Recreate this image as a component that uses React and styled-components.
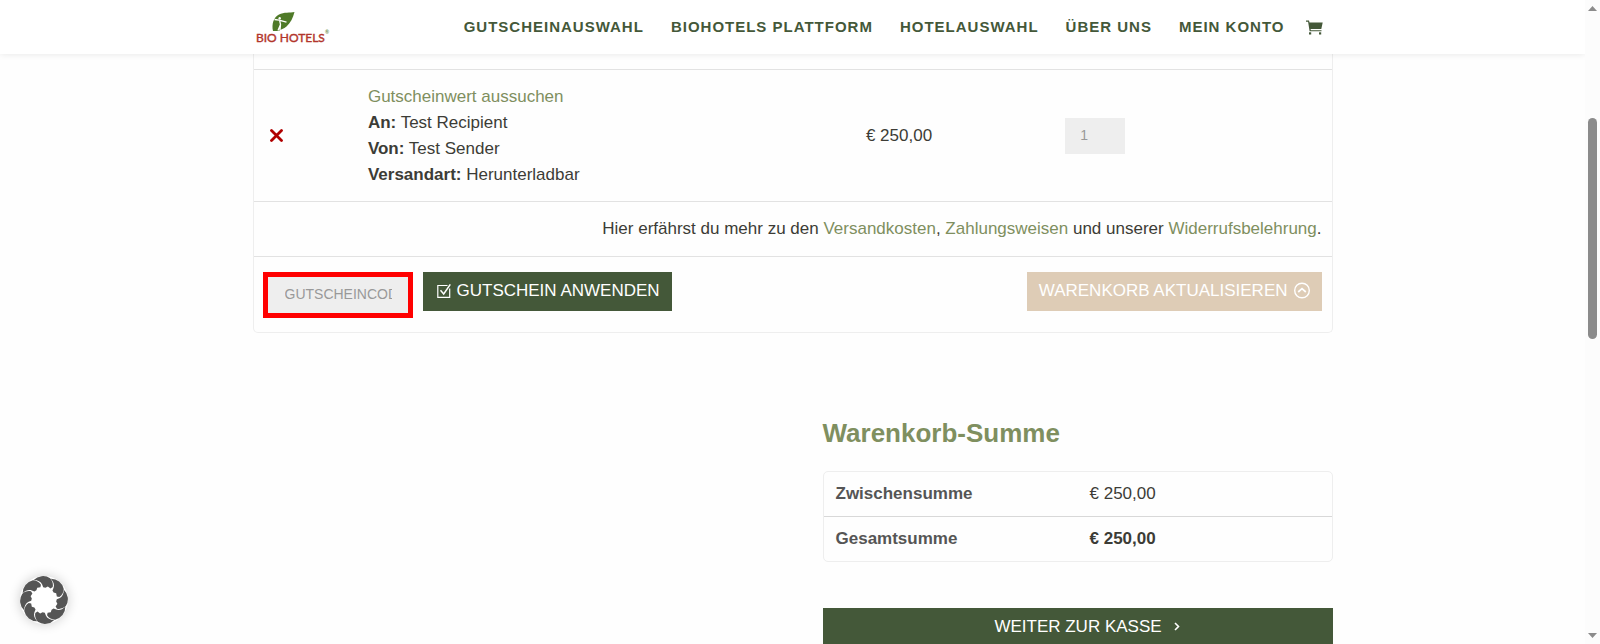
import React from "react";
import styled, { createGlobalStyle } from "styled-components";

const GlobalStyle = createGlobalStyle`
  * {
    box-sizing: border-box;
  }
  body {
    margin: 0;
    background: #fefefe;
    color: #3c3c36;
    font-family: "Liberation Sans", Arial, sans-serif;
    font-size: 17px;
    line-height: 26px;
  }
  a {
    color: #7f8f5f;
    text-decoration: none;
  }
`;

const Shell = styled.div`
  display: grid;
  grid-template-columns: minmax(0, 1fr) 15px;
  height: 100vh;
  overflow: hidden;
`;

const Page = styled.div`
  overflow: hidden;
`;

const Header = styled.header`
  position: relative;
  background: #fff;
  box-shadow: 0 0 7px rgba(0, 0, 0, 0.1);
`;

const Container = styled.div`
  width: 100%;
  max-width: 1080px;
  margin: 0 auto;
`;

const HeaderInner = styled(Container)`
  display: flex;
  align-items: center;
  justify-content: space-between;
  height: 54px;
  padding: 0 10px 0 2px;
`;

const Logo = styled.a`
  display: flex;
  svg {
    display: block;
  }
`;

const Nav = styled.nav`
  display: flex;
  align-items: center;
  gap: 27px;
`;

const NavLink = styled.a`
  padding-bottom: 1px;
  color: #445839;
  font-size: 15px;
  font-weight: bold;
  letter-spacing: 1px;
  text-transform: uppercase;
`;

const CartLink = styled.a`
  display: flex;
  margin-left: -6px;
  color: #445839;
`;

const CartTable = styled.table`
  width: 100%;
  padding-top: 15px;
  border: 1px solid #eee;
  border-top: 0;
  border-radius: 0 0 5px 5px;
  border-spacing: 0;
  table-layout: fixed;
  td {
    padding: 14px 12px 13px;
    border-top: 1px solid #e2e2e2;
    text-align: left;
    vertical-align: middle;
  }
  .remove {
    width: 9.5%;
  }
  .product {
    width: 46.2%;
  }
  .price {
    width: 18.5%;
  }
  td.info {
    padding: 14px 10px;
    text-align: right;
  }
  td.actions {
    padding: 15px 10px 14px 9px;
  }
`;

const RemoveButton = styled.button`
  display: block;
  padding: 3px 4px 5px;
  border: 0;
  background: none;
  color: #b00000;
  svg {
    display: block;
  }
`;

const Quantity = styled.input`
  display: block;
  width: 60px;
  height: 36px;
  padding: 0 15px 2px;
  border: 0;
  border-radius: 0;
  background: #eee;
  color: #999;
  font: 14px "Liberation Sans", Arial, sans-serif;
`;

const Actions = styled.div`
  display: flex;
  align-items: flex-start;
  gap: 10px;
`;

const CouponInput = styled.input`
  width: 150px;
  height: 46px;
  padding: 0 16px 2px 17px;
  border: 5px solid #f00;
  border-radius: 0;
  background: #eee;
  font: 14px "Liberation Sans", Arial, sans-serif;
  &::placeholder {
    color: #999;
    opacity: 1;
  }
`;

const Button = styled.button`
  display: flex;
  align-items: center;
  justify-content: center;
  gap: 6px;
  width: ${(props) => (props.$wide ? "100%" : "auto")};
  height: 39px;
  margin-left: ${(props) => (props.$right ? "auto" : "0")};
  padding: ${(props) => (props.$wide ? "0 0 2px 24px" : "0 12px 2px")};
  border: 0;
  background: ${(props) => (props.$muted ? "#deccb6" : "#445839")};
  color: #fff;
  font: 17px "Liberation Sans", Arial, sans-serif;
  text-transform: uppercase;
  white-space: nowrap;
  svg {
    flex: none;
  }
`;

const Totals = styled.section`
  width: 100%;
  max-width: 510px;
  margin: 84px 0 0 auto;
  h2 {
    margin: 0 0 22px;
    color: #7f8f5f;
    font-size: 26px;
    line-height: 32px;
  }
`;

const TotalsTable = styled.table`
  width: 100%;
  margin-bottom: 46px;
  border: 1px solid #eee;
  border-radius: 5px;
  border-spacing: 0;
  table-layout: fixed;
  th,
  td {
    padding: 9px 12px;
    text-align: left;
  }
  th {
    color: #555;
  }
  tr + tr th,
  tr + tr td {
    border-top: 1px solid #d8d8d8;
  }
`;

const CookieButton = styled.button`
  position: fixed;
  left: 20px;
  bottom: 20px;
  width: 48px;
  height: 48px;
  padding: 0;
  border: 0;
  border-radius: 50%;
  background: #fff;
  box-shadow: 0 0 12px rgba(0, 0, 0, 0.2);
  svg {
    display: block;
  }
`;

const ScrollTrack = styled.div`
  display: flex;
  flex-direction: column;
  align-items: center;
  padding: 6px 0;
  background: #fcfcfc;
`;

const ScrollRail = styled.div`
  flex: 1;
  width: 9px;
  padding-top: 107px;
`;

const ScrollThumb = styled.div`
  height: 43%;
  border-radius: 5px;
  background: #8b8b8b;
`;

const LogoMark = () => (
  <svg width="76" height="34" viewBox="0 0 76 34" role="img" aria-label="Bio Hotels">
    <path
      d="M18 21C16.500 14 18.500 7.500 24 4.500C29 2 35 3 39.500 2C38 8 35.500 13 31.500 16.500C29 18.700 25.500 19.500 23.500 21Z"
      fill="#4f7a28"
    />
    <circle cx="24.700" cy="8.200" r="1.200" fill="#fff" />
    <path
      d="M19.500 9.500L24 10.200L31.500 12.200M24.500 9.800L25.500 14.500L23 20.500M25.500 14.500L25 20"
      fill="none"
      stroke="#fff"
      strokeWidth="1.300"
    />
    <text
      x="1"
      y="32"
      fill="#b2352b"
      stroke="#b2352b"
      strokeWidth="0.400"
      fontFamily="Lato, sans-serif"
      fontSize="12"
    >
      BIO HOTELS
    </text>
    <text x="70" y="24" fill="#6f9150" fontFamily="Lato, sans-serif" fontSize="5" fontWeight="bold">
      ®
    </text>
  </svg>
);

const CartIcon = () => (
  <svg width="17" height="15" viewBox="0 0 17 15" fill="currentColor">
    <path d="M0 0.500H3L3.500 2.500H16.700L15.300 9H4.600L4.800 10.200H15.500V11.300H3.600L2.100 1.700H0Z" />
    <rect x="3" y="12.300" width="2.200" height="2.200" />
    <rect x="13" y="12.300" width="2.200" height="2.200" />
  </svg>
);

const CrossIcon = () => (
  <svg width="13" height="13" viewBox="0 0 13 13" fill="none" stroke="currentColor" strokeWidth="2.800">
    <path d="M1.500 1.500L11.500 11.500M11.500 1.500L1.500 11.500" strokeLinecap="round" />
  </svg>
);

const CheckBoxIcon = () => (
  <svg width="16" height="16" viewBox="-1 0 16 16" fill="none" stroke="currentColor" strokeWidth="1.200">
    <path d="M11.500 2.500H1.800V14.300H13.700V5.500" />
    <path d="M4.500 7.300L7.700 11L14.300 1.300" strokeWidth="1.500" />
  </svg>
);

const CircleUpIcon = () => (
  <svg width="16" height="17" viewBox="0 0 16 17" fill="none" stroke="currentColor" strokeWidth="1.400">
    <circle cx="8" cy="8.500" r="7.300" />
    <path d="M4.200 10L8 6.600L11.800 10" strokeWidth="1.700" />
  </svg>
);

const ChevronIcon = () => (
  <svg width="17" height="11" viewBox="0 0 17 11" fill="none" stroke="currentColor" strokeWidth="1.600">
    <path d="M7 2L10.500 5.500L7 9" />
  </svg>
);

const CookieIcon = () => (
  <svg width="48" height="48" viewBox="-24 -24 48 48">
    {[0, 45, 90, 135, 180, 225, 270, 315].map((angle) => (
      <path
        key={angle}
        d="M8 -21.200A13 13 0 0 0 -8.500 -20.700C-4.500 -20.200 -1.500 -18.500 -0.500 -15.500L0.300 -12.800L2.500 -12L5 -13L7.500 -11L9.800 -12.200C10.800 -15.500 10 -18.500 8 -21.200Z"
        transform={`rotate(${angle - 5})`}
        fill="#555"
      />
    ))}
  </svg>
);

const links = ["Gutscheinauswahl", "Biohotels Plattform", "Hotelauswahl", "Über uns", "Mein Konto"];

const details = [
  ["An:", "Test Recipient"],
  ["Von:", "Test Sender"],
  ["Versandart:", "Herunterladbar"],
];

const App = () => {
  return (
    <Shell>
      <GlobalStyle />
      <Page>
        <Header>
          <HeaderInner>
            <Logo href="#">
              <LogoMark />
            </Logo>
            <Nav>
              {links.map((link) => (
                <NavLink href="#" key={link}>
                  {link}
                </NavLink>
              ))}
              <CartLink href="#" aria-label="Warenkorb">
                <CartIcon />
              </CartLink>
            </Nav>
          </HeaderInner>
        </Header>
        <Container as="main">
          <CartTable>
            <colgroup>
              <col className="remove" />
              <col className="product" />
              <col className="price" />
              <col />
            </colgroup>
            <tbody>
              <tr>
                <td>
                  <RemoveButton type="button" aria-label="Entfernen">
                    <CrossIcon />
                  </RemoveButton>
                </td>
                <td>
                  <a href="#">Gutscheinwert aussuchen</a>
                  {details.map(([label, value]) => (
                    <div key={label}>
                      <b>{label}</b> {value}
                    </div>
                  ))}
                </td>
                <td>€ 250,00</td>
                <td>
                  <Quantity type="text" aria-label="Anzahl" defaultValue="1" />
                </td>
              </tr>
              <tr>
                <td className="info" colSpan={4}>
                  Hier erfährst du mehr zu den <a href="#">Versandkosten</a>,{" "}
                  <a href="#">Zahlungsweisen</a> und unserer <a href="#">Widerrufsbelehrung</a>.
                </td>
              </tr>
              <tr>
                <td className="actions" colSpan={4}>
                  <Actions>
                    <CouponInput type="text" aria-label="Gutscheincode" placeholder="GUTSCHEINCODE" />
                    <Button type="button">
                      <CheckBoxIcon />
                      Gutschein anwenden
                    </Button>
                    <Button type="button" $muted $right>
                      Warenkorb aktualisieren
                      <CircleUpIcon />
                    </Button>
                  </Actions>
                </td>
              </tr>
            </tbody>
          </CartTable>
          <Totals>
            <h2>Warenkorb-Summe</h2>
            <TotalsTable>
              <tbody>
                <tr>
                  <th scope="row">Zwischensumme</th>
                  <td>€ 250,00</td>
                </tr>
                <tr>
                  <th scope="row">Gesamtsumme</th>
                  <td>
                    <b>€ 250,00</b>
                  </td>
                </tr>
              </tbody>
            </TotalsTable>
            <Button type="button" $wide>
              Weiter zur Kasse
              <ChevronIcon />
            </Button>
          </Totals>
        </Container>
        <CookieButton type="button" aria-label="Cookie-Einstellungen">
          <CookieIcon />
        </CookieButton>
      </Page>
      <ScrollTrack>
        <svg width="9" height="5" viewBox="0 0 9 5" fill="#8b8b8b">
          <path d="M0 5L4.500 0L9 5Z" />
        </svg>
        <ScrollRail>
          <ScrollThumb />
        </ScrollRail>
        <svg width="9" height="5" viewBox="0 0 9 5" fill="#8b8b8b">
          <path d="M0 0L4.500 5L9 0Z" />
        </svg>
      </ScrollTrack>
    </Shell>
  );
};

export default App;
